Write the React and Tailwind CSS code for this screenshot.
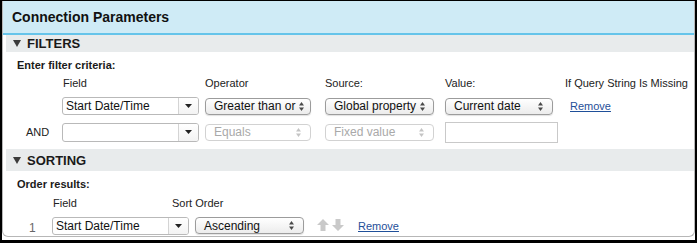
import React from 'react'

const font = "font-['Liberation_Sans',Arial,sans-serif]"

// Band header for a collapsible section (FILTERS / SORTING).
function SectionBand({ title, h }) {
  return (
    <div className={`ml-[3px] ${h} bg-[#e8ebec] flex items-center pl-[7px] gap-[6px]`}>
      <svg width="8" height="7" viewBox="0 0 8 7">
        <path d="M0 0 H8 L4 7 Z" fill="#3b3b3b" />
      </svg>
      <span className="text-[13px] font-bold text-[#1a1a1a] leading-none">{title}</span>
    </div>
  )
}

function UpDown({ disabled }) {
  const c = disabled ? '#c4c4c4' : '#4a4a4a'
  return (
    <svg width="5" height="9" viewBox="0 0 5 9" className="shrink-0">
      <path d="M0 3.5 L2.5 0 L5 3.5 Z" fill={c} />
      <path d="M0 5.5 L5 5.5 L2.5 9 Z" fill={c} />
    </svg>
  )
}

// Aqua-style popup button.
function Select({ value, w, disabled }) {
  return (
    <div
      className={`${w} h-[17px] rounded-[4px] border flex items-center pl-[8px] pr-[9px] ${
        disabled
          ? 'border-[#d2d2d2] bg-white text-[#a9a9a9]'
          : 'border-[#9c9c9c] bg-gradient-to-b from-white to-[#ececec] text-[#111] shadow-[0_1px_1px_rgba(0,0,0,0.12)]'
      }`}
    >
      <span className="flex-1 whitespace-nowrap text-[12px] leading-none pr-[4px]">{value}</span>
      <UpDown disabled={disabled} />
    </div>
  )
}

// Editable combo box with a dropdown button.
function Combo({ value, h = 'h-[18px]' }) {
  return (
    <div className={`w-[137px] ${h} rounded-[3px] border border-[#b9b9b9] bg-white flex overflow-hidden`}>
      <div className="flex-1 flex items-center pl-[3px] text-[12px] text-[#111] leading-none">{value}</div>
      <div className="w-[20px] border-l border-[#d4d4d4] flex items-center justify-center bg-gradient-to-b from-white to-[#f3f3f3]">
        <svg width="7" height="4" viewBox="0 0 7 4">
          <path d="M0 0 H7 L3.5 4 Z" fill="#222" />
        </svg>
      </div>
    </div>
  )
}

function RemoveLink() {
  return <span className="text-[11px] text-[#1f4f99] underline leading-none">Remove</span>
}

function SortArrows() {
  return (
    <svg width="27" height="12" viewBox="0 0 27 12">
      <path d="M6 0 L12 6 H8.5 V12 H3.5 V6 H0 Z" fill="#c9c9c9" />
      <path d="M21 12 L27 6 H23.5 V0 H18.5 V6 H15 Z" fill="#c9c9c9" />
    </svg>
  )
}

export default function App() {
  return (
    <div
      className={`${font} w-[697px] h-[243px] bg-white border-t border-x-2 border-b-[3px] border-black overflow-hidden`}
    >
      <div className="h-[236px] border-x border-b border-[#b7b7b7] rounded-b-[6px] overflow-hidden">
        {/* Header */}
        <div className="h-[34px] bg-[#cfebf6] border-b-2 border-[#66c4ea] flex items-center pl-[9px]">
          <span className="text-[14px] font-bold text-[#111] leading-none">Connection Parameters</span>
        </div>

        {/* Filters */}
        <SectionBand title="FILTERS" h="h-[17px]" />
        <div className="mt-[7px] h-[13px] pl-[14px] text-[11px] font-bold text-[#1a1a1a] leading-[13px]">
          Enter filter criteria:
        </div>

        <div className="mt-[5px] h-[13px] flex text-[11px] text-[#222] leading-[13px]">
          <div className="w-[59px]" />
          <div className="w-[143px] pl-[1px]">Field</div>
          <div className="w-[120px]">Operator</div>
          <div className="w-[120px]">Source:</div>
          <div className="w-[120px]">Value:</div>
          <div className="whitespace-nowrap">If Query String Is Missing</div>
        </div>

        <div className="mt-[7px] h-[18px] flex items-center">
          <div className="w-[59px]" />
          <div className="w-[143px]">
            <Combo value="Start Date/Time" />
          </div>
          <div className="w-[120px]">
            <Select value="Greater than or" w="w-[106px]" />
          </div>
          <div className="w-[120px]">
            <Select value="Global property" w="w-[109px]" />
          </div>
          <div className="w-[120px]">
            <Select value="Current date" w="w-[108px]" />
          </div>
          <div className="pl-[5px] -mt-[2px]">
            <RemoveLink />
          </div>
        </div>

        <div className="mt-[7px] h-[20px] flex items-center">
          <div className="w-[59px] pl-[23px] text-[11px] text-[#222] leading-none">AND</div>
          <div className="w-[143px]">
            <Combo value="" h="h-[19px]" />
          </div>
          <div className="w-[120px]">
            <Select value="Equals" w="w-[106px]" disabled />
          </div>
          <div className="w-[120px]">
            <Select value="Fixed value" w="w-[109px]" disabled />
          </div>
          <div className="w-[120px]">
            <div className="w-[113px] h-[21px] border border-[#c9c9c9] bg-white" />
          </div>
        </div>

        {/* Sorting */}
        <div className="mt-[7px]">
          <SectionBand title="SORTING" h="h-[22px]" />
        </div>
        <div className="mt-[7px] h-[13px] pl-[14px] text-[11px] font-bold text-[#1a1a1a] leading-[13px]">
          Order results:
        </div>

        <div className="mt-[6px] h-[13px] flex text-[11px] text-[#222] leading-[13px]">
          <div className="w-[50px]" />
          <div className="w-[119px]">Field</div>
          <div>Sort Order</div>
        </div>

        <div className="mt-[7px] h-[18px] flex items-center">
          <div className="w-[49px] pl-[26px] pt-[4px] text-[12px] text-[#666] leading-none">1</div>
          <div className="w-[143px]">
            <Combo value="Start Date/Time" />
          </div>
          <div className="w-[122px] -mt-[1px]">
            <Select value="Ascending" w="w-[109px]" />
          </div>
          <div className="w-[41px] -mt-[3px] flex">
            <SortArrows />
          </div>
          <div className="-mt-[3px]">
            <RemoveLink />
          </div>
        </div>
      </div>
    </div>
  )
}
